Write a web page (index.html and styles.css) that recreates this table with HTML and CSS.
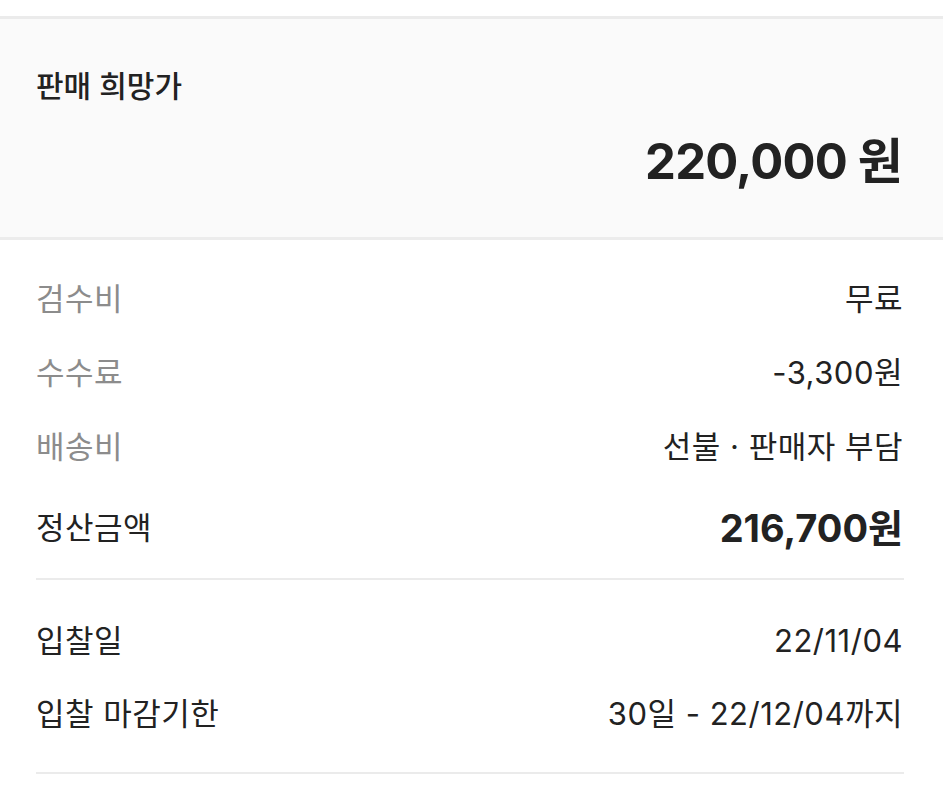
FILE: index.html
```html
<!DOCTYPE html>
<html lang="ko">
<head>
<meta charset="utf-8">
<title>판매 정보</title>
<link rel="stylesheet" href="styles.css">
</head>
<body>
<div class="page">
  <section class="price-box">
    <div class="price-label">판매 희망가</div>
    <div class="price-value"><span class="num">220,000</span> <span class="unit">원</span></div>
  </section>
  <section class="details">
    <div class="row"><span class="label muted">검수비</span><span class="value">무료</span></div>
    <div class="row"><span class="label muted">수수료</span><span class="value">-3,300원</span></div>
    <div class="row"><span class="label muted">배송비</span><span class="value">선불 · 판매자 부담</span></div>
    <div class="row total"><span class="label">정산금액</span><span class="value strong">216,700원</span></div>
  </section>
  <section class="details dates">
    <div class="row"><span class="label">입찰일</span><span class="value">22/11/04</span></div>
    <div class="row"><span class="label">입찰 마감기한</span><span class="value">30일 - 22/12/04까지</span></div>
  </section>
</div>
</body>
</html>
```
FILE: styles.css
```css
html, body {
  margin: 0;
  padding: 0;
  background: #ffffff;
}
body {
  font-family: "Inter", "Noto Sans CJK KR", sans-serif;
  color: #222222;
}
.page {
  padding-top: 16px;
}
.price-box {
  background: #fafafa;
  border-top: 3px solid #ebebeb;
  border-bottom: 3px solid #ececec;
  padding: 47px 41px 45px 36px;
  display: flex;
  flex-direction: column;
  gap: 26px;
}
.price-label {
  font-size: 30px;
  line-height: 40px;
  font-weight: 500;
  color: #222;
}
.price-value {
  text-align: right;
  font-size: 49px;
  line-height: 60px;
  font-weight: 700;
  color: #222;
  letter-spacing: -0.8px;
}
.details {
  margin: 0 39px 0 36px;
  padding: 39px 0 30px;
  border-bottom: 2px solid #ebebeb;
  display: flex;
  flex-direction: column;
  gap: 34px;
}
.row {
  display: flex;
  justify-content: space-between;
  align-items: center;
  font-size: 31px;
  line-height: 40px;
  letter-spacing: 0.5px;
  color: #222;
}
.row .muted {
  color: #8c8c8c;
}
.row.total {
  margin-top: 7px;
}
.value {
  text-align: right;
  margin-right: 1px;
}
.value.strong {
  font-size: 38px;
  font-weight: 700;
  letter-spacing: 0;
}
.dates {
  padding: 41px 0 38px;
  gap: 33px;
}
```
